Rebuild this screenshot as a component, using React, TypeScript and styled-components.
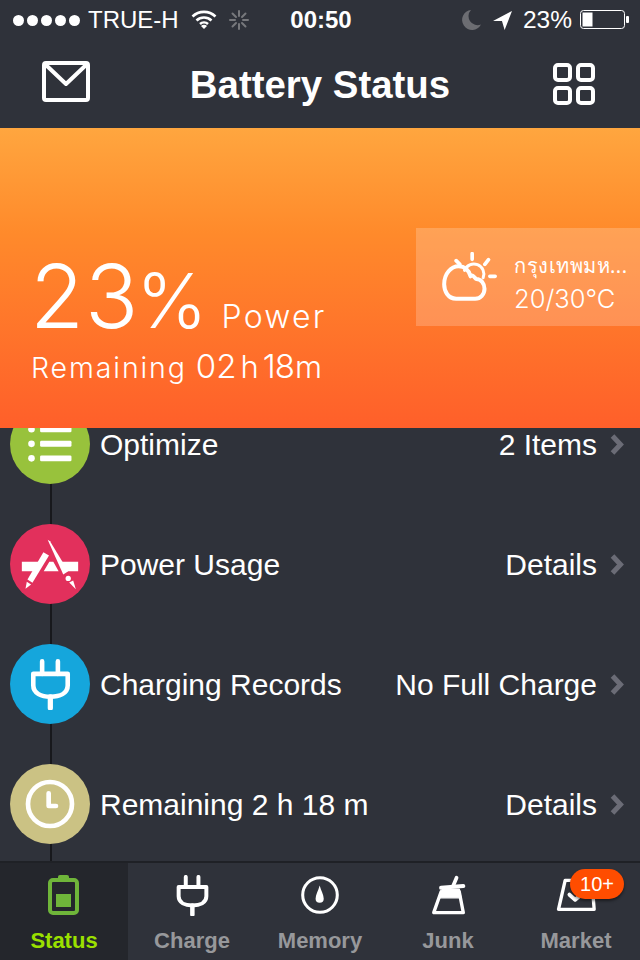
import React from 'react'
import styled, { createGlobalStyle } from 'styled-components'

const GlobalStyle = createGlobalStyle`
  html, body {
    margin: 0;
    padding: 0;
    background: #2f323a;
  }
  * {
    box-sizing: border-box;
  }
`

const SANS = `"Liberation Sans", Arial, sans-serif`
const ROUND = `Inter, Lato, "Noto Sans", sans-serif`

const Page = styled.div`
  width: 640px;
  height: 960px;
  display: flex;
  flex-direction: column;
  overflow: hidden;
  background: #2f323a;
  color: #fff;
  font-family: ${SANS};
`

const StatusBar = styled.div`
  height: 40px;
  padding: 0 11px 0 13px;
  display: grid;
  grid-template-columns: 1fr auto 1fr;
  align-items: center;
  font-size: 24px;
`

const StatusSide = styled.div<{ $end?: boolean }>`
  display: flex;
  align-items: center;
  justify-content: ${({ $end }) => ($end ? 'flex-end' : 'flex-start')};
`

const Signal = styled.div`
  display: flex;
  gap: 3px;
  margin-right: 8px;
`

const Dot = styled.span`
  width: 11px;
  height: 11px;
  border-radius: 50%;
  background: #fff;
`

const StatusGlyph = styled.svg<{ $gap?: number }>`
  margin-left: ${({ $gap }) => $gap ?? 0}px;
  flex: none;
`

const BatteryText = styled.span`
  margin-left: 11px;
  font-size: 24.5px;
`

const Clock = styled.div`
  font-size: 24px;
  font-weight: 700;
`

const NavBar = styled.div`
  height: 88px;
  padding: 0 42px;
  display: grid;
  grid-template-columns: 1fr auto 1fr;
  align-items: center;
`

const MailIcon = styled.svg`
  margin-bottom: 6px;
`

const GridIcon = styled.svg`
  justify-self: end;
  margin-right: 3px;
`

const NavTitle = styled.h1`
  margin: 0;
  font-size: 38.4px;
  font-weight: 700;
  line-height: 1;
  padding-top: 2px;
`

const Hero = styled.section`
  height: 300px;
  position: relative;
  z-index: 1;
  padding: 120px 0 0 30px;
  background: linear-gradient(180deg, #ffa63f 0%, #ff8a2b 35%, #ff5f2a 100%);
`

const BigLine = styled.div`
  display: flex;
  align-items: baseline;
  font-family: ${ROUND};
  font-weight: 300;
`

const Percent = styled.span`
  font-size: 88px;
  line-height: 96px;
  letter-spacing: 1px;
`

const PercentSign = styled.span`
  font-size: 76px;
  margin-left: -3px;
`

const PowerLabel = styled.span`
  font-size: 32px;
  margin-left: 14px;
  letter-spacing: 2.2px;
`

const RemainLine = styled.div`
  font-family: ${ROUND};
  font-weight: 300;
  font-size: 28.5px;
  line-height: 40px;
  letter-spacing: 1.9px;
  display: flex;
  align-items: baseline;
  padding-left: 1px;
`

const RemainValue = styled.span<{ $flush?: boolean }>`
  font-size: 33px;
  letter-spacing: ${({ $flush }) => ($flush ? -1 : 0)}px;
  margin-left: ${({ $flush }) => ($flush ? 4 : 9)}px;
`

const RemainUnit = styled.span<{ $tight?: boolean }>`
  font-size: 31px;
  letter-spacing: 0;
  margin-left: ${({ $tight }) => ($tight ? 1 : 4)}px;
`

const WeatherCard = styled.div`
  position: absolute;
  right: 0;
  top: 100px;
  width: 224px;
  height: 98px;
  display: flex;
  align-items: center;
  padding-left: 25px;
  gap: 16px;
  background: rgba(255, 255, 255, 0.2);
  font-family: ${ROUND};
`

const WeatherText = styled.div`
  display: flex;
  flex-direction: column;
  gap: 3px;
  padding-top: 10px;
`

const City = styled.div`
  font-family: "Noto Sans", ${SANS};
  font-size: 20px;
  line-height: 30px;
  letter-spacing: 0.5px;
  white-space: nowrap;
`

const Temp = styled.div`
  font-size: 25.5px;
  line-height: 30px;
  font-weight: 300;
`

const List = styled.div`
  flex: 1;
  position: relative;
  margin-top: -44px;
  display: flex;
  flex-direction: column;
  overflow: hidden;
`

const Spine = styled.div`
  position: absolute;
  left: 50px;
  top: 0;
  bottom: 0;
  width: 2px;
  background: #17181c;
`

const Row = styled.div`
  height: 120px;
  flex: none;
  display: flex;
  align-items: center;
  padding: 0 16px 0 10px;
  position: relative;
`

const Bubble = styled.div<{ $color: string }>`
  width: 80px;
  height: 80px;
  border-radius: 50%;
  flex: none;
  display: flex;
  align-items: center;
  justify-content: center;
  background: ${({ $color }) => $color};
`

const RowLabel = styled.div`
  margin-left: 10px;
  padding-top: 2px;
  flex: 1;
  font-size: 30px;
  white-space: nowrap;
`

const RowValue = styled.div`
  padding-top: 2px;
  font-size: 30px;
  white-space: nowrap;
`

const Chevron = styled.svg`
  margin-left: 13px;
  flex: none;
`

const TabBar = styled.nav`
  height: 99px;
  flex: none;
  display: grid;
  grid-template-columns: repeat(5, 1fr);
  background: #2f323a;
  border-top: 2px solid #1f2126;
  position: relative;
`

const Tab = styled.div<{ $active?: boolean }>`
  position: relative;
  display: flex;
  flex-direction: column;
  align-items: center;
  padding-top: 10px;
  background: ${({ $active }) => ($active ? '#24262c' : 'transparent')};
  color: ${({ $active }) => ($active ? '#9be000' : '#97989b')};
  font-size: 22px;
  font-weight: 700;
`

const TabIcon = styled.div`
  height: 44px;
  display: flex;
  align-items: center;
  justify-content: center;
  margin-bottom: 11px;
`

const Badge = styled.span`
  position: absolute;
  top: 6px;
  right: 16px;
  width: 54px;
  height: 30px;
  border-radius: 15px;
  background: #ff4d00;
  color: #fff;
  font-size: 20px;
  font-weight: 400;
  line-height: 30px;
  text-align: center;
  box-shadow: 0 2px 3px rgba(0, 0, 0, 0.45);
`

const rows = [
  { label: 'Optimize', value: '2 Items', color: '#98c23c', icon: 'list' },
  { label: 'Power Usage', value: 'Details', color: '#e2305c', icon: 'apps' },
  { label: 'Charging Records', value: 'No Full Charge', color: '#15a6dc', icon: 'plug' },
  { label: 'Remaining 2 h 18 m', value: 'Details', color: '#cbc284', icon: 'clock' },
]

function PlugIcon({ width, height, weight }: { width: number; height: number; weight: number }) {
  return (
    <svg width={width} height={height} viewBox="90 85 125 155" fill="none" stroke="#fff" strokeLinecap="round" strokeLinejoin="round">
      <path d="M127 92V130M175 92V130" strokeWidth={weight} />
      <path d="M100 130H205V165C205 190 180 200 152 200C125 200 100 190 100 165Z" strokeWidth={weight} />
      <path d="M152 200V234" strokeWidth={weight + 2} />
    </svg>
  )
}

function RowIcon({ name }: { name: string }) {
  if (name === 'list') {
    return (
      <svg width="44" height="38" viewBox="86 15 132 115" fill="#fff">
        <circle cx="96" cy="28" r="10" />
        <rect x="122" y="19" width="95" height="18" rx="4" />
        <circle cx="96" cy="72" r="10" />
        <rect x="122" y="63" width="95" height="18" rx="4" />
        <circle cx="96" cy="116" r="10" />
        <rect x="122" y="107" width="95" height="18" rx="4" />
      </svg>
    )
  }
  if (name === 'apps') {
    return (
      <svg width="60" height="53" viewBox="60 340 180 160" fill="#fff">
        <path d="M65 412H118L103 440H65ZM148 412H160L176 440H131ZM178 412H235V440H194Z" />
        <path d="M130 383L147 393L97 475L82 465Z" />
        <path d="M80 472L93 480L76 493Z" />
        <path d="M143 345L150 350L205 440L190 450Z" />
        <circle cx="205" cy="462" r="8" />
        <path d="M208 474L220 468L228 495Z" />
      </svg>
    )
  }
  if (name === 'plug') {
    return <PlugIcon width={41} height={51} weight={14} />
  }
  return (
    <svg width="50" height="50" viewBox="75 447 150 150" fill="none" stroke="#fff" strokeLinecap="round" strokeLinejoin="round">
      <circle cx="150" cy="522" r="66" strokeWidth="14" />
      <path d="M146 490V528H168" strokeWidth="14" />
    </svg>
  )
}

function TabGlyph({ name }: { name: string }) {
  if (name === 'Status') {
    return (
      <svg width="32" height="40" viewBox="0 0 32 40" fill="none">
        <rect x="10" y="0" width="11" height="6" rx="2" fill="#6fb53a" />
        <rect x="2" y="5" width="27" height="33" rx="3" stroke="#6fb53a" strokeWidth="4" />
        <rect x="8" y="19" width="15" height="13" fill="#6fb53a" />
      </svg>
    )
  }
  if (name === 'Charge') {
    return <PlugIcon width={33} height={41} weight={15} />
  }
  if (name === 'Memory') {
    return (
      <svg width="38" height="38" viewBox="155 15 112 112" fill="none">
        <circle cx="211" cy="71" r="51" stroke="#fff" strokeWidth="9" />
        <path d="M210 43C214 58 222 70 222 82A12 12 0 1 1 198 82C198 70 206 58 210 43Z" fill="#fff" />
      </svg>
    )
  }
  if (name === 'Junk') {
    return (
      <svg width="37" height="41" viewBox="325 60 110 122" fill="none" stroke="#fff" strokeLinecap="round" strokeLinejoin="round">
        <path d="M404 68L394 92" strokeWidth="11" />
        <path d="M358 98L424 93" strokeWidth="12" />
        <path d="M362 102H412L417 128H352Z" fill="#fff" strokeWidth="4" />
        <path d="M358 110L336 172H424L412 110" strokeWidth="10" />
      </svg>
    )
  }
  return (
    <svg width="42" height="36" viewBox="705 75 125 108" fill="none" stroke="#fff" strokeLinecap="round" strokeLinejoin="round">
      <path d="M735 85H815L822 172H715Z" strokeWidth="10" />
      <path d="M748 128L765 143L790 122" strokeWidth="12" />
    </svg>
  )
}

const tabs = ['Status', 'Charge', 'Memory', 'Junk', 'Market']

export default function App() {
  return (
    <Page>
      <GlobalStyle />
      <StatusBar>
        <StatusSide>
          <Signal>
            {[0, 1, 2, 3, 4].map((i) => (
              <Dot key={i} />
            ))}
          </Signal>
          <span>TRUE-H</span>
          <StatusGlyph $gap={12} width="26" height="20" viewBox="0 0 26 20" fill="none" stroke="#fff" strokeWidth="2.600">
            <path d="M1.500 6.500a16.500 16.500 0 0 1 23 0" />
            <path d="M5.500 10.500a11 11 0 0 1 15 0" />
            <path d="M9 14a6 6 0 0 1 8 0" />
            <path d="M13 19l-3-3a4 4 0 0 1 6 0z" fill="#fff" stroke="none" />
          </StatusGlyph>
          <StatusGlyph $gap={12} width="20" height="20" viewBox="0 0 20 20" stroke="#77787c" strokeWidth="2" strokeLinecap="round">
            <path d="M10 1v5M10 14v5M1 10h5M14 10h5M3.500 3.500l3.500 3.500M13 13l3.500 3.500M16.500 3.500L13 7M7 13l-3.500 3.500" />
          </StatusGlyph>
        </StatusSide>
        <Clock>00:50</Clock>
        <StatusSide $end>
          <StatusGlyph width="19" height="20" viewBox="0 0 19 20" fill="#6c6d72">
            <path d="M9 0a10 10 0 1 0 10 14.500A9 9 0 0 1 9 0z" />
          </StatusGlyph>
          <StatusGlyph $gap={12} width="19" height="19" viewBox="0 0 18 18" fill="#fff">
            <path d="M18 0L0 9.500h8.500L11 18z" />
          </StatusGlyph>
          <BatteryText>23%</BatteryText>
          <StatusGlyph $gap={8} width="49" height="20" viewBox="0 0 49 20" fill="none">
            <rect x="0.500" y="0.500" width="44" height="18" rx="3" stroke="#fff" />
            <rect x="2.500" y="2.500" width="10" height="14" fill="#fff" />
            <rect x="46" y="6" width="3" height="7" rx="1" fill="#fff" />
          </StatusGlyph>
        </StatusSide>
      </StatusBar>
      <NavBar>
        <MailIcon width="48" height="41" viewBox="0 0 48 41" fill="none" stroke="#fff" strokeLinecap="round" strokeLinejoin="round">
          <rect x="2" y="2" width="44" height="37" rx="2" strokeWidth="4" />
          <path d="M5 5l19 18L43 5" strokeWidth="4" />
        </MailIcon>
        <NavTitle>Battery Status</NavTitle>
        <GridIcon width="42" height="42" viewBox="0 0 42 42" fill="none" stroke="#fff" strokeWidth="4">
          <rect x="2" y="2" width="15" height="15" rx="3" />
          <rect x="25" y="2" width="15" height="15" rx="3" />
          <rect x="2" y="25" width="15" height="15" rx="3" />
          <rect x="25" y="25" width="15" height="15" rx="3" />
        </GridIcon>
      </NavBar>
      <Hero>
        <BigLine>
          <Percent>23</Percent>
          <PercentSign>%</PercentSign>
          <PowerLabel>Power</PowerLabel>
        </BigLine>
        <RemainLine>
          Remaining
          <RemainValue>02</RemainValue>
          <RemainUnit>h</RemainUnit>
          <RemainValue $flush>18</RemainValue>
          <RemainUnit $tight>m</RemainUnit>
        </RemainLine>
        <WeatherCard>
          <svg width="57" height="50" viewBox="120 95 170 150" fill="none" stroke="#fff" strokeLinecap="round" strokeLinejoin="round">
            <path d="M213 100V117M165 121L176 132M262 118L251 132M266 168H282" strokeWidth="11" />
            <path d="M190 150A30 30 0 0 1 246 172" strokeWidth="9" />
            <path d="M165 235C140 235 129 212 129 192C129 160 150 138 172 138C190 138 203 150 208 168C216 160 222 176 225 176C240 176 250 190 250 205C250 222 238 235 222 235Z" strokeWidth="12" />
          </svg>
          <WeatherText>
            <City>กรุงเทพมห...</City>
            <Temp>20/30°C</Temp>
          </WeatherText>
        </WeatherCard>
      </Hero>
      <List>
        <Spine />
        {rows.map((r) => (
          <Row key={r.label}>
            <Bubble $color={r.color}>
              <RowIcon name={r.icon} />
            </Bubble>
            <RowLabel>{r.label}</RowLabel>
            <RowValue>{r.value}</RowValue>
            <Chevron width="14" height="21" viewBox="0 0 14 21" fill="none" stroke="#6b6c76" strokeWidth="5">
              <path d="M2.500 2L10.500 10.500L2.500 19" />
            </Chevron>
          </Row>
        ))}
      </List>
      <TabBar>
        {tabs.map((t) => (
          <Tab key={t} $active={t === 'Status'}>
            <TabIcon>
              <TabGlyph name={t} />
            </TabIcon>
            {t}
            {t === 'Market' && <Badge>10+</Badge>}
          </Tab>
        ))}
      </TabBar>
    </Page>
  )
}
